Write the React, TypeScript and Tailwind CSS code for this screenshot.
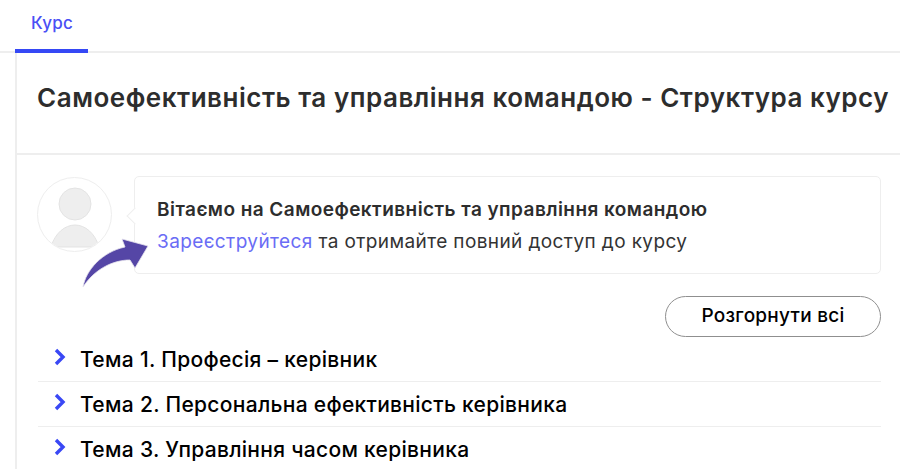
import React from "react";

const topics = [
  "Тема 1. Професія – керівник",
  "Тема 2. Персональна ефективність керівника",
  "Тема 3. Управління часом керівника",
];

const App = () => {
  return (
    <div className="relative h-[469px] w-[900px] overflow-hidden bg-white font-['Inter',sans-serif] text-[#2d2d2d]">
      {/* Tabs */}
      <div className="flex h-[53px] border-b-2 border-[#eeeeee] pl-[15px]">
        <div className="h-[53px] w-[73px] border-b-[4px] border-[#3548f5] pl-[16px] pt-[12px] text-[17px] font-medium leading-[22px] tracking-[0.2px] text-[#4a4ff5]">
          Курс
        </div>
      </div>

      <div className="ml-[15px] border-l-2 border-[#eeeeee]">
        {/* Title */}
        <div className="flex h-[102px] items-center border-b-2 border-[#eeeeee] pb-[10px] pl-[20px]">
          <h1 className="whitespace-nowrap text-[26px] font-semibold leading-[32px] tracking-[0.52px] text-[#2d2d2d]">
            Самоефективність та управління командою - Структура курсу
          </h1>
        </div>

        {/* Welcome */}
        <div className="flex pl-[20px] pt-[21px]">
          <div className="mt-[1px] h-[75px] w-[75px] shrink-0 overflow-hidden rounded-full border border-[#eeeeee]">
            <svg width="73" height="73" viewBox="0 0 73 73">
              <circle cx="37" cy="26" r="16" fill="#eeeeee" stroke="#e3e3e3" />
              <path d="M13 69 C17 55 27 47 37 47 C47 47 57 55 61 69 Z" fill="#eeeeee" stroke="#e3e3e3" />
            </svg>
          </div>
          <div className="relative ml-[22px] h-[98px] w-[747px] rounded-[5px] border border-[#eeeeee] pl-[22px] pt-[21px]">
            <div className="absolute left-[-6px] top-[33px] h-[12px] w-[12px] rotate-45 border-b border-l border-[#eeeeee] bg-white" />
            <p className="whitespace-nowrap text-[19px] font-semibold leading-[24px] tracking-[0.44px] text-[#2d2d2d]">
              Вітаємо на Самоефективність та управління командою
            </p>
            <p className="mt-[8px] whitespace-nowrap text-[19px] leading-[24px] tracking-[0.4px] text-[#333333]">
              <span className="text-[#6a6cf5]">Зареєструйтеся</span> та отримайте повний доступ до курсу
            </p>
          </div>
        </div>

        {/* Expand all */}
        <div className="flex justify-end pr-[19px] pt-[22px]">
          <button className="h-[41px] w-[216px] rounded-full border border-[#8f8f8f] text-[19px] font-medium tracking-[0.25px] text-black">
            Розгорнути всі
          </button>
        </div>

        {/* Topics */}
        <div className="ml-[21px] mr-[19px] mt-[0px]">
          {topics.map((t) => (
            <div key={t} className="flex h-[45px] items-center border-b border-[#eeeeee] pl-[15px]">
              <svg width="14" height="18" viewBox="0 0 14 18" className="mb-[4px] shrink-0">
                <path d="M3 2 L10 9 L3 16" fill="none" stroke="#3a48f5" strokeWidth="3.4" />
              </svg>
              <span className="ml-[13px] mt-[2px] whitespace-nowrap text-[21px] font-medium leading-[26px] tracking-[0.3px] text-black">{t}</span>
            </div>
          ))}
        </div>
      </div>

      {/* Arrow annotation */}
      <svg width="80" height="60" viewBox="0 0 80 60" className="absolute left-[78px] top-[234px]">
        <path
          d="M5 53 C8 36 24 18 47 13 L44 5 L70 12 L57 34 L52 26 C34 26 16 36 5 53 Z"
          fill="#5546a6"
          stroke="#e4e2ee"
          strokeWidth="0.8"
        />
      </svg>
    </div>
  );
};

export default App;
